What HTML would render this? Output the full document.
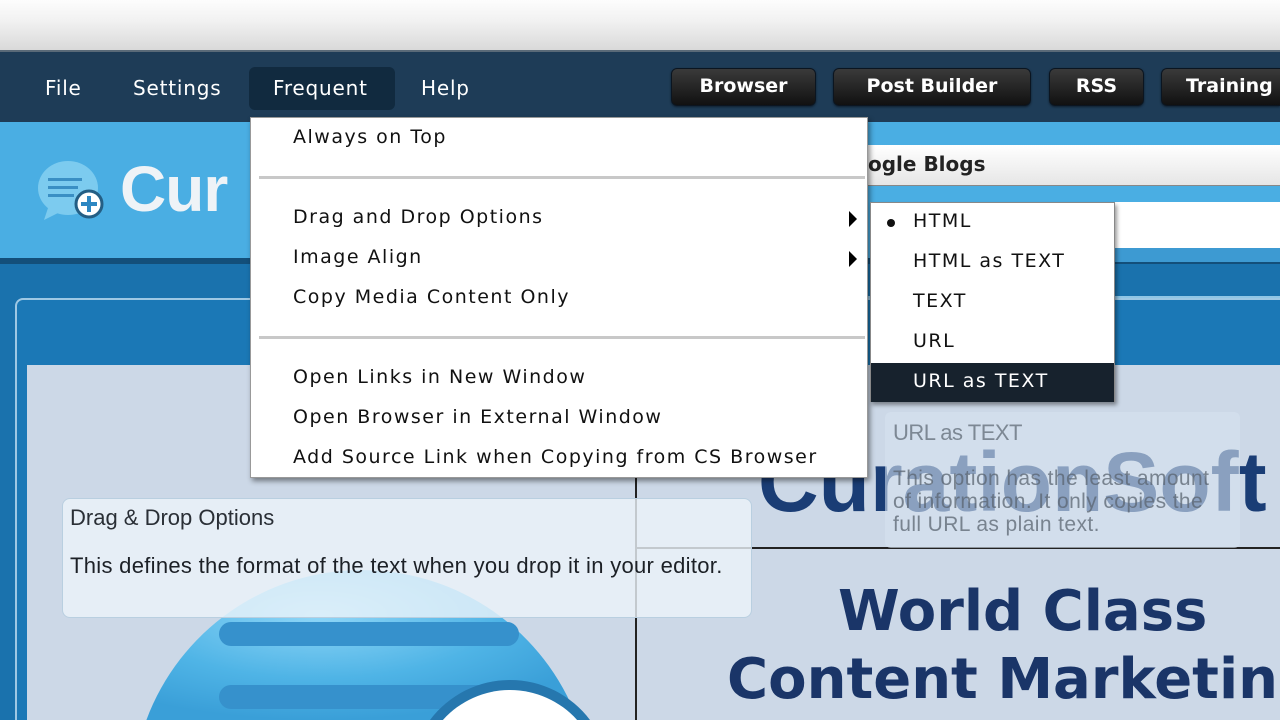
<!DOCTYPE html>
<html><head><meta charset="utf-8"><style>
*{margin:0;padding:0;box-sizing:border-box}
html,body{width:1280px;height:720px;overflow:hidden}
body{font-family:"DejaVu Sans","Liberation Sans",sans-serif}
#w{position:relative;width:1280px;height:720px;overflow:hidden;background:#1a74b0}
.a{position:absolute}
.top{left:0;top:0;width:1280px;height:52px;background:linear-gradient(#fdfdfd,#f2f2f2 40%,#d9d9d9);border-bottom:2px solid #5a6a78}
.nav{left:0;top:52px;width:1280px;height:70px;background:#1e3c57}
.mi{top:76px;color:#fff;font-size:20px;letter-spacing:.8px}
.btn{top:68px;height:38px;border-radius:6px;background:linear-gradient(#3a3a3a,#111);border:1px solid #0b1520;color:#fff;font-weight:bold;font-size:19px;text-align:center;line-height:35px;box-shadow:0 1px 2px rgba(0,0,0,.5)}
.menu{left:250px;top:117px;width:618px;height:361px;background:#fff;box-shadow:2px 3px 5px rgba(0,0,0,.45);border:1px solid #999}
.it{left:42px;font-size:19px;color:#111;letter-spacing:1.5px;white-space:nowrap}
.sep{left:8px;width:606px;height:3px;background:#c8c8c8}
.arr{left:598px;width:0;height:0;border-left:8px solid #000;border-top:8px solid transparent;border-bottom:8px solid transparent}
.sub{left:870px;top:202px;width:245px;height:200px;background:#fff;box-shadow:2px 3px 4px rgba(0,0,0,.4);border:1px solid #888}
.si{left:42px;font-size:19px;color:#111;letter-spacing:1.5px;white-space:nowrap}
</style></head><body><div id="w">
<div class="a top"></div>
<div class="a nav"></div>
<div class="a" style="left:249px;top:67px;width:146px;height:43px;background:#112a3f;border-radius:6px"></div>
<div class="a mi" style="left:45px">File</div>
<div class="a mi" style="left:133px">Settings</div>
<div class="a mi" style="left:273px">Frequent</div>
<div class="a mi" style="left:421px">Help</div>
<div class="a btn" style="left:671px;width:145px">Browser</div>
<div class="a btn" style="left:833px;width:198px">Post Builder</div>
<div class="a btn" style="left:1049px;width:95px">RSS</div>
<div class="a btn" style="left:1161px;width:119px;text-align:left;padding-left:24px;white-space:nowrap;border-right:none;border-radius:6px 0 0 6px">Training</div>

<div class="a" style="left:0;top:122px;width:1280px;height:140px;background:#4aaee3"></div>
<div class="a" style="left:0;top:258px;width:1280px;height:6px;background:#134f7a"></div>
<div class="a" style="left:0;top:264px;width:1280px;height:456px;background:#1a72ad"></div>
<svg class="a" style="left:34px;top:158px" width="75" height="70" viewBox="0 0 75 70">
<ellipse cx="34" cy="30" rx="30" ry="27" fill="#7ccbef"/>
<path d="M14 50 L10 62 L26 54Z" fill="#7ccbef"/>
<rect x="14" y="20" width="34" height="3" fill="#3a8fc4"/><rect x="14" y="28" width="30" height="3" fill="#3a8fc4"/><rect x="14" y="36" width="26" height="3" fill="#3a8fc4"/>
<circle cx="55" cy="46" r="13" fill="#fff" stroke="#245e84" stroke-width="3"/>
<rect x="53" y="38" width="4" height="16" fill="#2d87c2"/><rect x="47" y="44" width="16" height="4" fill="#2d87c2"/>
</svg>
<div class="a" style="left:120px;top:152px;color:#eef3f7;font-size:64px;font-weight:bold;font-family:'Liberation Sans',sans-serif;letter-spacing:-1px">Cur</div>

<div class="a" style="left:860px;top:145px;width:420px;height:41px;background:linear-gradient(#fff,#e6e6e6);border-bottom:1px solid #888"></div>
<div class="a" style="left:868px;top:152px;font-size:20px;font-weight:bold;color:#222">ogle Blogs</div>
<div class="a" style="left:1110px;top:202px;width:170px;height:46px;background:#fff"></div>
<div class="a" style="left:1110px;top:248px;width:170px;height:14px;background:#3d9ad2"></div>
<div class="a" style="left:860px;top:296px;width:420px;height:2px;background:#8fc6e6"></div>

<div class="a" style="left:15px;top:298px;width:1265px;height:422px;border:2px solid #9ec8e4;border-right:none;border-bottom:none;border-radius:8px 0 0 0;background:#1b78b6"></div>
<div class="a" style="left:27px;top:365px;width:1253px;height:355px;background:#ccd8e7"></div>
<div class="a" style="left:635px;top:478px;width:2px;height:242px;background:#222"></div>
<div class="a" style="left:636px;top:547px;width:644px;height:2px;background:#222"></div>
<div class="a" style="left:758px;top:432px;font-size:84px;line-height:100px;font-weight:bold;color:#1a3d75;font-family:'Liberation Sans',sans-serif;white-space:nowrap">CurationSoft</div>
<div class="a" style="left:838px;top:578px;font-size:56px;font-weight:bold;color:#1a3568;line-height:68px;white-space:nowrap">World Class</div>
<div class="a" style="left:727px;top:646px;font-size:56px;font-weight:bold;color:#1a3568;line-height:68px;white-space:nowrap">Content Marketin</div>
<svg class="a" style="left:132px;top:570px" width="480" height="150" viewBox="0 0 480 150">
<defs><radialGradient id="g" cx="0.4" cy="0.3" r="0.7"><stop offset="0" stop-color="#8fd6f7"/><stop offset="0.6" stop-color="#4fb4e6"/><stop offset="1" stop-color="#3a9fd8"/></radialGradient></defs>
<path d="M14.4 150 A230 230 0 0 1 445.6 150 Z" fill="url(#g)"/>
<rect x="87" y="52" width="300" height="24" rx="12" fill="#3691cc"/>
<rect x="87" y="115" width="300" height="24" rx="12" fill="#3691cc"/>
<path d="M298 150 A100 100 0 0 1 458 150 Z" fill="#2677ae"/>
<path d="M310.9 150 A90 90 0 0 1 445.1 150 Z" fill="#fff"/>
</svg>

<div class="a" style="left:62px;top:498px;width:690px;height:120px;border-radius:8px;background:rgba(236,244,250,.8);border:1px solid #b9cfe0"></div>
<div class="a" style="left:70px;top:505px;font-size:22px;color:#2a2f36;font-family:'Liberation Sans',sans-serif;white-space:nowrap">Drag &amp; Drop Options</div>
<div class="a" style="left:70px;top:553px;font-size:22px;color:#1c2026;font-family:'Liberation Sans',sans-serif;letter-spacing:.3px;white-space:nowrap">This defines the format of the text when you drop it in your editor.</div>
<div class="a" style="left:885px;top:412px;width:355px;height:136px;border-radius:6px;background:rgba(214,226,240,.6)"></div>
<div class="a" style="left:893px;top:420px;font-size:22px;color:#7d8894;font-family:'Liberation Sans',sans-serif;letter-spacing:-.5px">URL as TEXT</div>
<div class="a" style="left:893px;top:467px;font-size:21px;line-height:23px;color:rgba(90,100,112,.75);font-family:'Liberation Sans',sans-serif;letter-spacing:.4px;white-space:nowrap">This option has the least amount<br>of information. It only copies the<br>full URL as plain text.</div>

<div class="a menu">
<div class="a it" style="top:8px">Always on Top</div>
<div class="a sep" style="top:58px"></div>
<div class="a it" style="top:88px">Drag and Drop Options</div><div class="a arr" style="top:93px"></div>
<div class="a it" style="top:128px">Image Align</div><div class="a arr" style="top:133px"></div>
<div class="a it" style="top:168px">Copy Media Content Only</div>
<div class="a sep" style="top:218px"></div>
<div class="a it" style="top:248px">Open Links in New Window</div>
<div class="a it" style="top:288px">Open Browser in External Window</div>
<div class="a it" style="top:328px">Add Source Link when Copying from CS Browser</div>
</div>
<div class="a sub">
<div class="a" style="left:16px;top:16px;width:8px;height:8px;border-radius:50%;background:#111"></div>
<div class="a si" style="top:7px">HTML</div>
<div class="a si" style="top:47px">HTML as TEXT</div>
<div class="a si" style="top:87px">TEXT</div>
<div class="a si" style="top:127px">URL</div>
<div class="a" style="left:0;top:160px;width:243px;height:39px;background:#17222d"></div>
<div class="a si" style="top:167px;color:#fff">URL as TEXT</div>
</div>
</div></body></html>
